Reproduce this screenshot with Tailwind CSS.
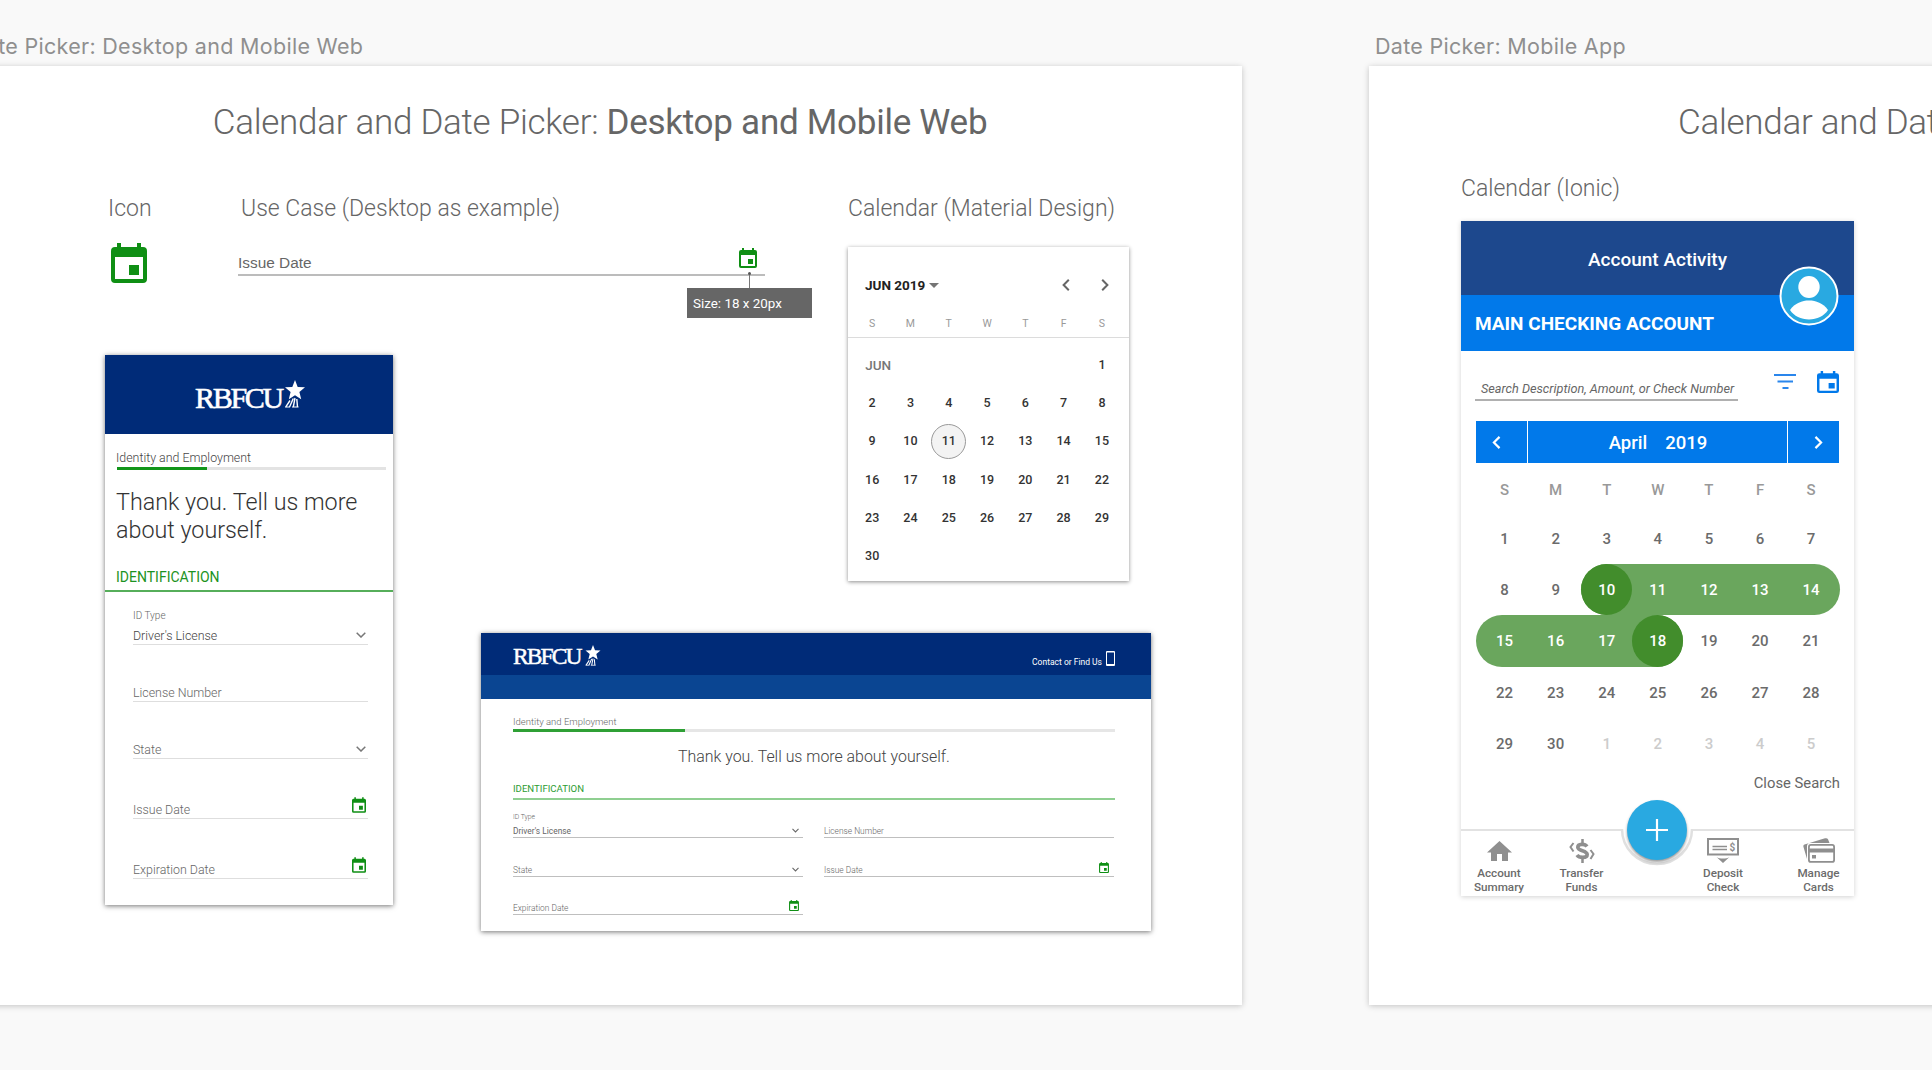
<!DOCTYPE html>
<html lang="en">
  <head>
    <meta charset="UTF-8" />
    <meta name="viewport" content="width=device-width, initial-scale=1.0" />
    <title>Date Picker</title>
    <script src="https://cdn.jsdelivr.net/npm/@tailwindcss/browser@4"></script>
  </head>
  <body class="bg-[#f9f9f9] h-screen overflow-hidden font-[Roboto,sans-serif] text-[#666]">
    <!-- shared icons -->
    <svg class="hidden">
      <symbol id="icon-event" viewBox="0 0 18 20">
        <path fill="currentColor" fill-rule="evenodd" d="M3 0h2v2h8V0h2v2h1a2 2 0 0 1 2 2v14a2 2 0 0 1-2 2H2a2 2 0 0 1-2-2V4a2 2 0 0 1 2-2h1zM2 7v11h14V7zM9 11h5v5H9z" />
      </symbol>
      <symbol id="icon-down" viewBox="0 0 10 6">
        <path fill="none" stroke="currentColor" stroke-width="1.5" d="M.7.7 5 5 9.3.7" />
      </symbol>
      <symbol id="icon-left" viewBox="0 0 8 12">
        <path fill="none" stroke="currentColor" stroke-width="2" d="M6.8.8 1.6 6l5.2 5.2" />
      </symbol>
      <symbol id="icon-right" viewBox="0 0 8 12">
        <path fill="none" stroke="currentColor" stroke-width="2" d="M1.2.8 6.4 6l-5.2 5.2" />
      </symbol>
      <symbol id="icon-star" viewBox="0 0 20 28">
        <path fill="currentColor" d="M10 0l2.700 6.900 7.300.4-5.600 4.700 1.800 7.300L10 15.300l-6.200 4 1.800-7.300L0 7.300l7.300-.4z" />
        <path fill="none" stroke="currentColor" stroke-width="1.400" d="M5 20.500.8 26.800M8.300 18.500 4.500 27M10 18 8.300 27M11.800 19l.7 8" />
        <path stroke="currentColor" stroke-width="1" d="M0 27h5M7 27h6.500" />
      </symbol>
    </svg>

    <div class="flex gap-[127px] w-[2693px] -ml-[42px]">
      <!-- artboard: desktop and mobile web -->
      <section class="w-[1284px] shrink-0">
        <h2 class="h-[66px] pt-[34px] pl-3 font-[Inter,sans-serif] text-[21.5px] leading-6 tracking-[0.3px] text-[#8f8f8f] whitespace-nowrap">Date Picker: Desktop and Mobile Web</h2>
        <div class="relative h-[939px] bg-white shadow-[0_1px_6px_rgba(0,0,0,0.22)]">
          <h1 class="pt-[37px] text-center text-[35px] leading-10 font-light tracking-[-0.27px]">Calendar and Date Picker: <span class="font-normal">Desktop and Mobile Web</span></h1>

          <div class="absolute left-[150px] top-[129px]">
            <h3 class="text-[23px] leading-7 font-light">Icon</h3>
            <svg class="w-9 h-10 mt-5 ml-[3px] text-[#0f8f14]"><use href="#icon-event" /></svg>
          </div>

          <div class="absolute left-[280px] top-[129px] w-[527px]">
            <h3 class="pl-[3px] text-[23px] leading-7 font-light">Use Case (Desktop as example)</h3>
            <div class="flex items-end justify-between h-[53px] border-b-2 border-[#bcbcbc] pr-2">
              <span class="mb-[3px] font-[Liberation_Sans,sans-serif] text-[15.4px] leading-4">Issue Date</span>
              <svg class="w-[18px] h-5 mb-[6px] text-[#0f8f14]"><use href="#icon-event" /></svg>
            </div>
          </div>
          <div class="absolute left-[729px] top-[206px] flex flex-col w-[125px]">
            <span class="ml-[61px] size-[3px] rounded-full bg-[#555]"></span>
            <span class="ml-[62px] w-px h-[13px] bg-[#777]"></span>
            <span class="h-[30px] pl-[6px] bg-[#666] text-white text-[13.4px] leading-[31px]">Size: 18 x 20px</span>
          </div>

          <div class="absolute left-[890px] top-[129px] w-[281px]">
            <h3 class="text-[23px] leading-7 font-light whitespace-nowrap">Calendar (Material Design)</h3>
            <div class="mt-6 h-[334px] bg-white shadow-[0_1px_4px_rgba(0,0,0,0.45)]">
              <div class="flex items-center h-[76px] pl-[17px] pr-5">
                <span class="text-[13.5px] font-bold text-[#222]">JUN 2019</span>
                <svg class="w-[10px] h-[5px] ml-1" viewBox="0 0 10 5"><path fill="#757575" d="M0 0h10L5 5z" /></svg>
                <svg class="w-2 h-3 ml-auto text-[#666]"><use href="#icon-left" /></svg>
                <svg class="w-2 h-3 ml-[31px] text-[#666]"><use href="#icon-right" /></svg>
              </div>
              <div id="june-head" class="grid grid-cols-[repeat(7,38.3px)] h-[15px] border-b border-[#dcdcdc] pl-[5px] text-center text-[10.5px] leading-[2px] text-[#999]"></div>
              <div id="june-days" class="grid grid-cols-[repeat(7,38.3px)] pl-[5px] pt-[8px] text-center text-[12.5px] font-medium text-[#333]"></div>
            </div>
          </div>

          <!-- mobile web form -->
          <div class="absolute left-[147px] top-[289px] w-[288px] h-[550px] bg-white shadow-[0_1px_5px_rgba(0,0,0,0.55)]">
            <div class="flex h-[79px] bg-[#002b78] pl-[90px] pt-[25px] text-white">
              <span class="w-[88px] font-[Liberation_Serif,serif] text-[30px] leading-[36px] tracking-[-2.3px] [-webkit-text-stroke:0.6px_white]">RBFCU</span>
              <svg class="w-5 h-7 ml-[2px]"><use href="#icon-star" /></svg>
            </div>
            <div class="pl-[11px] pr-3 pt-[15px]">
              <p class="text-[12.4px] leading-[18px] font-light text-[#444]">Identity and Employment</p>
              <div class="w-[269px] ml-px h-[3px] bg-[#e3e3e3]"><div class="w-[90px] h-full bg-[#12951a]"></div></div>
              <p class="mt-[19px] text-[23.3px] leading-[27.5px] font-light text-[#333]">Thank you. Tell us more about yourself.</p>
            </div>
            <p class="h-[48px] pl-[11px] pt-[25px] border-b-2 border-[#56ae5a] text-[14px] leading-4 text-[#1c9322]">IDENTIFICATION</p>
            <div class="pl-[28px] pr-[25px] text-[12.4px] leading-4 font-light text-[#666]">
              <p class="pt-4 h-[31px] text-[10px]">ID Type</p>
              <div class="flex items-end justify-between h-[22px] border-b border-[#dedede] pr-[2px] text-[#444]">Driver's License <svg class="w-[10px] h-[6px] mb-[6px] text-[#777]"><use href="#icon-down" /></svg></div>
              <div class="flex items-end h-[57px] border-b border-[#dedede]">License Number</div>
              <div class="flex items-end justify-between h-[57px] border-b border-[#dedede] pr-[2px]">State <svg class="w-[10px] h-[6px] mb-[6px] text-[#777]"><use href="#icon-down" /></svg></div>
              <div class="flex items-end justify-between h-[60px] border-b border-[#dedede] pr-[2px]">Issue Date <svg class="w-[14px] h-4 mb-[5px] text-[#0f8f14]"><use href="#icon-event" /></svg></div>
              <div class="flex items-end justify-between h-[60px] border-b border-[#dedede] pr-[2px]">Expiration Date <svg class="w-[14px] h-4 mb-[5px] text-[#0f8f14]"><use href="#icon-event" /></svg></div>
            </div>
          </div>

          <!-- desktop form -->
          <div class="absolute left-[523px] top-[567px] w-[670px] h-[298px] bg-white shadow-[0_1px_5px_rgba(0,0,0,0.55)]">
            <div class="flex h-[42px] bg-[#002b78] pl-[32px] pr-[36px] pt-3 text-white">
              <span class="w-[70px] font-[Liberation_Serif,serif] text-[23.5px] leading-[23px] tracking-[-1.9px] [-webkit-text-stroke:0.5px_white]">RBFCU</span>
              <svg class="w-4 h-[21px] ml-[2px]"><use href="#icon-star" /></svg>
              <span class="ml-auto pt-[11px] text-[8.5px] leading-3">Contact or Find Us</span>
              <svg class="w-[9px] h-[15px] ml-[4px] mt-[6px]" viewBox="0 0 9 15"><path fill="#fff" fill-rule="evenodd" d="M1 0h7a1 1 0 0 1 1 1v13a1 1 0 0 1-1 1H1a1 1 0 0 1-1-1V1a1 1 0 0 1 1-1zm0 1.500v11.500h7V1.500z" /></svg>
            </div>
            <div class="h-6 bg-[#0a4592]"></div>
            <div class="pl-8 pr-9">
              <p class="pt-[16px] h-[30px] text-[9.5px] leading-[14px] font-light">Identity and Employment</p>
              <div class="h-[3px] bg-[#e6e6e6]"><div class="w-[172px] h-full bg-[#2fa035]"></div></div>
              <p class="pt-[15px] text-center text-[15.9px] leading-5 font-light text-[#444]">Thank you. Tell us more about yourself.</p>
              <p class="pt-[16px] h-[33px] border-b-2 border-[#8fcf91] text-[9.6px] leading-3 text-[#2c9c31]">IDENTIFICATION</p>
              <div class="grid grid-cols-[290px_290px] gap-x-[21px] text-[8.4px] font-light leading-3 text-[#666]">
                <div>
                  <p class="pt-[12px] h-[23px] text-[6.8px] leading-[10px]">ID Type</p>
                  <div class="flex items-end justify-between h-[15px] border-b border-[#bfbfbf] pr-1 font-normal">Driver's License <svg class="w-[7px] h-[5px] mb-[4px]"><use href="#icon-down" /></svg></div>
                  <div class="flex items-end justify-between h-[39px] border-b border-[#bfbfbf] pr-1">State <svg class="w-[7px] h-[5px] mb-[4px]"><use href="#icon-down" /></svg></div>
                  <div class="flex items-end justify-between h-[38px] border-b border-[#bfbfbf] pr-1">Expiration Date <svg class="w-[10px] h-[11px] mb-[3px] text-[#0f8f14]"><use href="#icon-event" /></svg></div>
                </div>
                <div>
                  <div class="flex items-end h-[38px] border-b border-[#bfbfbf]">License Number</div>
                  <div class="flex items-end justify-between h-[39px] border-b border-[#bfbfbf] pr-[5px]">Issue Date <svg class="w-[10px] h-[11px] mb-[3px] text-[#0f8f14]"><use href="#icon-event" /></svg></div>
                </div>
              </div>
            </div>
          </div>
        </div>
      </section>

      <!-- artboard: mobile app -->
      <section class="w-[1282px] shrink-0">
        <h2 class="h-[66px] pt-[34px] pl-[6px] font-[Inter,sans-serif] text-[21.5px] leading-6 tracking-[0.3px] text-[#8f8f8f]">Date Picker: Mobile App</h2>
        <div class="relative h-[939px] bg-white shadow-[0_1px_6px_rgba(0,0,0,0.22)]">
          <h1 class="pt-[37px] pl-[309px] text-[35px] leading-10 font-light tracking-[-0.27px]">Calendar and Date Picker: <span class="font-normal">Mobile App</span></h1>
          <div class="absolute left-[92px] top-[109px] w-[393px]">
            <h3 class="text-[23px] leading-7 font-light">Calendar (Ionic)</h3>
            <div class="relative mt-[18px] h-[675px] bg-white shadow-[0_1px_5px_rgba(0,0,0,0.18)]">
              <div class="h-[74px] bg-[#1d488d] pt-[27px] text-center text-[19px] leading-6 font-medium text-white">Account Activity</div>
              <div class="h-14 bg-[#0179ea] pl-[14px] text-[19px] leading-[57px] font-bold text-white">MAIN CHECKING ACCOUNT</div>
              <svg class="absolute left-[318px] top-[45px] size-[60px]" viewBox="0 0 60 60">
                <circle cx="30" cy="30" r="28.500" fill="#29a9e1" stroke="#fff" stroke-width="2" />
                <ellipse cx="30" cy="21" rx="10.700" ry="11" fill="#fff" />
                <path fill="#fff" d="M11 44c5-7 12-9.500 19-9.500s14 2.500 19 9.500c-4 6-11 9.500-19 9.500s-15-3.500-19-9.500z" />
              </svg>

              <div class="flex items-start pl-[14px] pr-[15px] pt-5 h-[70px]">
                <div class="w-[263px] h-[30px] pl-[6px] pt-[10px] border-b-2 border-[#b0b0b0] text-[12.7px] leading-4 italic whitespace-nowrap">Search Description, Amount, or Check Number</div>
                <svg class="w-[22px] h-4 ml-9 mt-[3px]" viewBox="0 0 22 16"><path stroke="#2a86ec" stroke-width="2" d="M0 1h22M3.500 7.500h15.500M8.500 14h6" /></svg>
                <svg class="w-[22px] h-[22px] ml-auto text-[#0179ea]" viewBox="0 0 18 20" preserveAspectRatio="none"><path fill="currentColor" fill-rule="evenodd" d="M3 0h2v2h8V0h2v2h1a2 2 0 0 1 2 2v14a2 2 0 0 1-2 2H2a2 2 0 0 1-2-2V4a2 2 0 0 1 2-2h1zM2 7v11h14V7zM9.500 11h5v5h-5z" /></svg>
              </div>

              <div class="flex gap-px mx-[15px] h-[42px] text-[18.5px] leading-[44px] font-medium text-white">
                <div class="flex items-center w-[51px] pl-4 bg-[#0179ea]"><svg class="w-[9px] h-[13px]"><use href="#icon-left" /></svg></div>
                <div class="flex flex-1 justify-center gap-[18px] pl-px bg-[#0179ea]"><span>April</span><span>2019</span></div>
                <div class="flex items-center justify-end w-[51px] pr-4 bg-[#0179ea]"><svg class="w-[9px] h-[13px]"><use href="#icon-right" /></svg></div>
              </div>

              <div id="april-head" class="grid grid-cols-[repeat(7,51.1px)] ml-[18px] h-[50px] text-center text-[15px] leading-[54px] font-medium text-[#999]"></div>
              <div id="april-days" class="grid grid-cols-[repeat(7,51.1px)] ml-[18px] text-center text-[15px] leading-[52px] font-medium text-[#6b6b6b]"></div>
              <p class="pr-[14px] pt-[4px] text-right text-[14.8px] leading-5">Close Search</p>

              <!-- tab bar -->
              <div class="absolute left-0 bottom-0 flex w-full h-[67px] border-t-2 border-[#e2e2e2] pl-3 pt-2 text-center text-[11.7px] leading-[13.7px] font-medium text-[#6b6b6b]">
                <div class="w-[52px]">
                  <svg class="w-[25px] h-[25px] mx-auto" viewBox="0 0 25 25"><path fill="#8f8f8f" d="M12.500 2 25 13.500h-4V22h-6v-7h-5v7H4v-8.500H0z" /></svg>
                  <p class="pt-[3px]">Account Summary</p>
                </div>
                <div class="w-[52px] ml-[30.5px]">
                  <svg class="w-[26px] h-[25px] mx-auto" viewBox="0 0 26 25">
                    <path fill="none" stroke="#8f8f8f" stroke-width="3.600" d="M18 7.500C16 4.500 8.800 4.500 8.800 8.200c0 4 9.400 3 9.400 7.300 0 4-8.200 3.500-10.200.5" />
                    <path fill="none" stroke="#8f8f8f" stroke-width="2.500" d="M13.500-1v6M13.500 18v6" />
                    <path fill="none" stroke="#8f8f8f" stroke-width="2" d="M4.500 4 1.500 8l3 4.500M21.500 11l3 4-3 5" />
                  </svg>
                  <p class="pt-[3px]">Transfer Funds</p>
                </div>
                <div class="w-[52px] ml-[89.5px]">
                  <svg class="w-8 h-[25px] mx-auto -mt-px mb-px" viewBox="0 0 32 25">
                    <rect x="1" y="1" width="30" height="15.500" fill="none" stroke="#8f8f8f" stroke-width="2" />
                    <path stroke="#8f8f8f" stroke-width="1.300" d="M5.500 8.500h14.500M5.500 11.500h14.500" />
                    <text x="22.500" y="12.500" font-size="10" font-weight="700" fill="#8f8f8f">$</text>
                    <path fill="#8f8f8f" d="M9.500 19c3 2 10 2 13 0L16 25z" />
                  </svg>
                  <p class="pt-[3px]">Deposit Check</p>
                </div>
                <div class="w-[44px] ml-[47.5px]">
                  <svg class="w-8 h-[25px] mx-auto -mt-px mb-px" viewBox="0 0 32 25">
                    <path fill="#8f8f8f" d="M1.500 6.500 22 .3c1.500-.4 2.500 0 3 1L26.500 5H7C5 5 4 6.500 4 8v13L.5 9c-.4-1.300 0-2.100 1-2.500z" />
                    <rect x="5.900" y="6.900" width="25.200" height="17" rx="2" fill="#fff" stroke="#8f8f8f" stroke-width="1.800" />
                    <path fill="#8f8f8f" d="M6 10.500h25v4H6zM9 17h4v3.500H9z" />
                  </svg>
                  <p class="pt-[3px] -mx-1">Manage Cards</p>
                </div>
              </div>
              <svg class="absolute left-[158px] top-[571px] w-[76px] h-[78px]" viewBox="0 0 76 78">
                <path fill="#fff" d="M3 36h70v3a35 35 0 0 1-70 0z" />
                <path fill="none" stroke="#e0e0e0" stroke-width="2.500" d="M3 37a35 35 0 0 0 70 0" />
              </svg>
              <div class="absolute left-[166px] top-[579px] size-[60px] rounded-full bg-[#29a9e1] shadow-[0_2px_3px_rgba(0,0,0,0.4)] flex items-center justify-center">
                <svg class="size-[22px]" viewBox="0 0 22 22"><path stroke="#fff" stroke-width="2.200" d="M11 0v22M0 11h22" /></svg>
              </div>
            </div>
          </div>
        </div>
      </section>
    </div>

    <script>
      const letters = ["S", "M", "T", "W", "T", "F", "S"];

      ["june-head", "april-head"].forEach((id) => {
        document.getElementById(id).innerHTML = letters.map((l) => `<span>${l}</span>`).join("");
      });

      // June starts on Saturday, the month label takes the first cell
      const june = document.getElementById("june-days");
      let juneHtml = `<span class="flex items-center justify-center h-[38.3px] col-span-1 pl-3 text-[13.5px] text-[#777]">JUN</span><span class="col-span-5"></span>`;
      for (let d = 1; d <= 30; d++) {
        const inner = d === 11
          ? `<span class="flex items-center justify-center shrink-0 size-[35px] rounded-full border border-[#999] bg-[#f3f3f3]">${d}</span>`
          : d;
        juneHtml += `<span class="flex items-center justify-center h-[38.3px]">${inner}</span>`;
      }
      june.innerHTML = juneHtml;

      const april = document.getElementById("april-days");
      let aprilHtml = "";
      for (let i = 1; i <= 35; i++) {
        const day = i > 30 ? i - 30 : i;
        let cls = "";
        let inner = day;
        if (i > 30) cls = "text-[#ccc]";
        // selected range: 10 to 18
        if (i >= 10 && i <= 18) cls = "bg-[#6aa65d] text-white";
        if (i === 10) cls += " rounded-l-full";
        if (i === 14) cls += " rounded-r-full -mr-[3px] pr-[3px]";
        if (i === 15) cls += " rounded-l-full -ml-[3px] pl-[3px]";
        if (i === 18) cls += " rounded-r-full";
        if (i === 10 || i === 18) {
          inner = `<span class="block h-full rounded-full bg-[#428d2c]">${day}</span>`;
        }
        aprilHtml += `<div class="h-[51.2px] ${cls}">${inner}</div>`;
      }
      april.innerHTML = aprilHtml;
    </script>
  </body>
</html>
